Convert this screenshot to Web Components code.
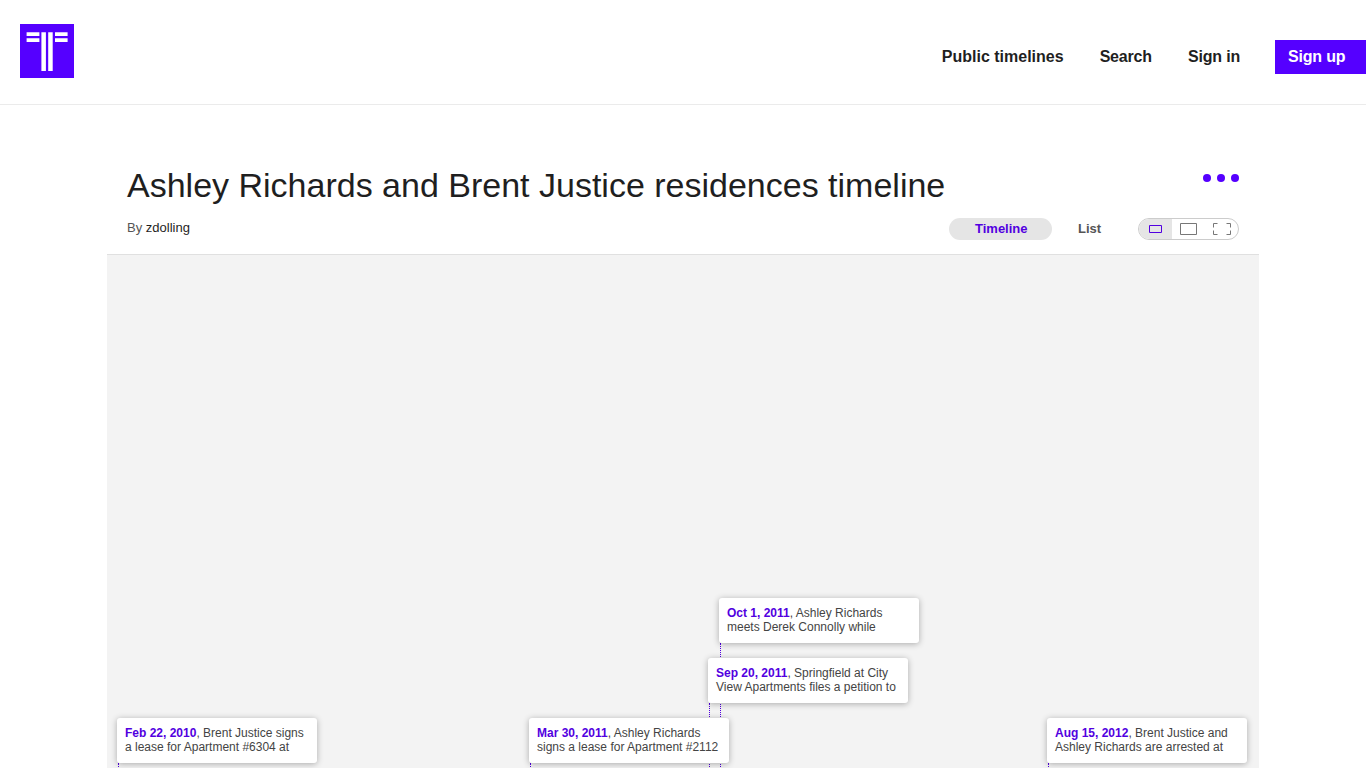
<!DOCTYPE html>
<html lang="en">
<head>
<meta charset="utf-8">
<title>Ashley Richards and Brent Justice residences timeline</title>
<style>
    html, body {
        margin: 0;
        height: 100%;
        overflow: hidden;
    }
    body {
        display: flex;
        flex-direction: column;
        background: #fff;
        color: #1f1f1f;
        font-family: "Liberation Sans", Arial, sans-serif;
        --brand: #5500ff;
        --accent: #5200e0;
    }
</style>
</head>
<body>
<site-header>
    <nav-link>Public timelines</nav-link>
    <nav-link tight>Search</nav-link>
    <nav-link tight>Sign in</nav-link>
    <nav-link tight primary>Sign up</nav-link>
</site-header>
<timeline-page>
    <span slot="title">Ashley Richards and Brent Justice residences timeline</span>
    <span slot="author">zdolling</span>
    <view-tabs slot="controls"></view-tabs>
    <size-switch slot="controls"></size-switch>
    <timeline-event x="10" y="463" date="Feb 22, 2010">Brent Justice signs a lease for Apartment #6304 at</timeline-event>
    <timeline-event x="422" y="463" date="Mar 30, 2011">Ashley Richards signs a lease for Apartment #2112</timeline-event>
    <timeline-event x="601" y="403" date="Sep 20, 2011">Springfield at City View Apartments files a petition to</timeline-event>
    <timeline-event x="612" y="343" date="Oct 1, 2011">Ashley Richards meets Derek Connolly while</timeline-event>
    <timeline-event x="940" y="463" date="Aug 15, 2012">Brent Justice and Ashley Richards are arrested at</timeline-event>
</timeline-page>

<script>
class SiteHeader extends HTMLElement {
    constructor() {
        super();
        this.attachShadow({ mode: 'open' });
        this.shadowRoot.innerHTML = `
      <style>
        :host {
          display: flex;
          flex: none;
          justify-content: space-between;
          box-sizing: border-box;
          height: 105px;
          padding: 24px 0 0 20px;
          border-bottom: 1px solid #ebebeb;
        }
        svg {
          display: block;
        }
        nav {
          display: flex;
          align-items: flex-start;
          gap: 36px;
          padding-top: 16px;
        }
      </style>
      <svg width="54" height="54" viewBox="0 0 54 54">
        <rect width="54" height="54" fill="#5500ff"/>
        <path fill="#fff" d="M6.6 8.2h12.8v3.9H6.6zM6.6 14.2h12.8v3.9H6.6zM21.4 8.2h4.5v38.9h-4.5zM28.2 8.2h4.5v38.9h-4.5zM35 8.2h12.6v3.9H35zM35 14.2h12.6v3.9H35z"/>
      </svg>
      <nav><slot></slot></nav>
    `;
    }
}

class NavLink extends HTMLElement {
    constructor() {
        super();
        this.attachShadow({ mode: 'open' });
        this.shadowRoot.innerHTML = `
      <style>
        :host {
          display: block;
          font-size: 16px;
          font-weight: bold;
          line-height: 34px;
          white-space: nowrap;
          cursor: pointer;
        }
        :host([tight]) {
          letter-spacing: -0.18px;
        }
        :host([primary]) {
          box-sizing: border-box;
          width: 91px;
          padding-left: 13px;
          margin-left: -1px;
          background: var(--brand);
          color: #fff;
        }
      </style>
      <slot></slot>
    `;
    }
}

class TimelinePage extends HTMLElement {
    constructor() {
        super();
        this.attachShadow({ mode: 'open' });
        this.shadowRoot.innerHTML = `
      <style>
        :host {
          display: flex;
          flex: 1;
          flex-direction: column;
          min-height: 0;
          width: 1152px;
          margin: 0 auto;
        }
        .heading {
          display: flex;
          justify-content: space-between;
          padding: 60px 20px 0;
        }
        h1 {
          margin: 0;
          font-size: 34px;
          font-weight: normal;
          line-height: 41px;
          height: 40px;
          white-space: nowrap;
        }
        .more {
          display: flex;
          gap: 6px;
          padding-top: 9px;
        }
        .more i {
          width: 8px;
          height: 8px;
          border-radius: 50%;
          background: var(--brand);
        }
        .meta {
          display: flex;
          align-items: center;
          height: 22px;
          padding: 13px 20px 14px;
          font-size: 13px;
        }
        .by {
          flex: 1;
          color: #555;
          line-height: 18px;
          padding-bottom: 2px;
        }
        .by slot {
          color: #1f1f1f;
        }
        .canvas {
          position: relative;
          flex: 1;
          min-height: 0;
          border-top: 1px solid #e0e0e0;
          background: #f3f3f3;
          overflow: hidden;
        }
      </style>
      <div class="heading">
        <h1><slot name="title"></slot></h1>
        <div class="more"><i></i><i></i><i></i></div>
      </div>
      <div class="meta">
        <div class="by">By <slot name="author"></slot></div>
        <slot name="controls"></slot>
      </div>
      <div class="canvas"><slot></slot></div>
    `;
    }
}

class ViewTabs extends HTMLElement {
    constructor() {
        super();
        this.attachShadow({ mode: 'open' });
        this.shadowRoot.innerHTML = `
      <style>
        :host {
          display: flex;
          font-size: 13px;
          font-weight: bold;
          line-height: 21px;
          color: #555;
        }
        span {
          box-sizing: border-box;
          height: 22px;
          padding: 0 26px;
          border-radius: 11px;
        }
        .active {
          width: 103px;
          background: #e5e5e5;
          color: var(--accent);
        }
        .list {
          width: 86px;
        }
      </style>
      <span class="active">Timeline</span>
      <span class="list">List</span>
    `;
    }
}

class SizeSwitch extends HTMLElement {
    constructor() {
        super();
        this.attachShadow({ mode: 'open' });
        this.shadowRoot.innerHTML = `
      <style>
        :host {
          display: flex;
          box-sizing: border-box;
          width: 101px;
          height: 22px;
          border: 1px solid #ccc;
          border-radius: 11px;
          overflow: hidden;
        }
        div {
          width: 33px;
          height: 20px;
        }
        .active {
          background: #e5e5e5;
        }
        svg {
          display: block;
          fill: none;
          stroke: #777;
        }
        .active svg {
          stroke: var(--accent);
        }
      </style>
      <div class="active"><svg width="33" height="20"><path d="M10.5 6.5h12v7h-12z"/></svg></div>
      <div><svg width="33" height="20"><path d="M8.5 4.5h16v11h-16z"/></svg></div>
      <div><svg width="33" height="20"><path d="M8.5 8.5v-4h4M21.5 4.5h4v4M8.5 11.5v4h4M21.5 15.5h4v-4"/></svg></div>
    `;
    }
}

class TimelineEvent extends HTMLElement {
    constructor() {
        super();
        this.attachShadow({ mode: 'open' });
        this.shadowRoot.innerHTML = `
      <style>
        :host {
          display: block;
          position: absolute;
          width: 200px;
          height: 45px;
        }
        .stem {
          position: absolute;
          top: 45px;
          left: 1px;
          height: 300px;
          border-left: 1px dotted var(--accent);
        }
        .card {
          position: relative;
          z-index: 1;
          box-sizing: border-box;
          height: 45px;
          padding: 8px;
          border-radius: 3px;
          background: #fff;
          box-shadow: 0 1px 6px rgba(0, 0, 0, 0.3);
          color: #444;
          font-size: 12px;
          line-height: 14px;
        }
        b {
          color: var(--accent);
        }
      </style>
      <div class="stem"></div>
      <div class="card"><b></b>, <slot></slot></div>
    `;
    }

    connectedCallback() {
        // Place the event on the timeline canvas
        this.style.left = this.getAttribute('x') + 'px';
        this.style.top = this.getAttribute('y') + 'px';
        this.shadowRoot.querySelector('b').textContent = this.getAttribute('date');
    }
}

// Define the custom elements
customElements.define('site-header', SiteHeader);
customElements.define('nav-link', NavLink);
customElements.define('timeline-page', TimelinePage);
customElements.define('view-tabs', ViewTabs);
customElements.define('size-switch', SizeSwitch);
customElements.define('timeline-event', TimelineEvent);
</script>
</body>
</html>
